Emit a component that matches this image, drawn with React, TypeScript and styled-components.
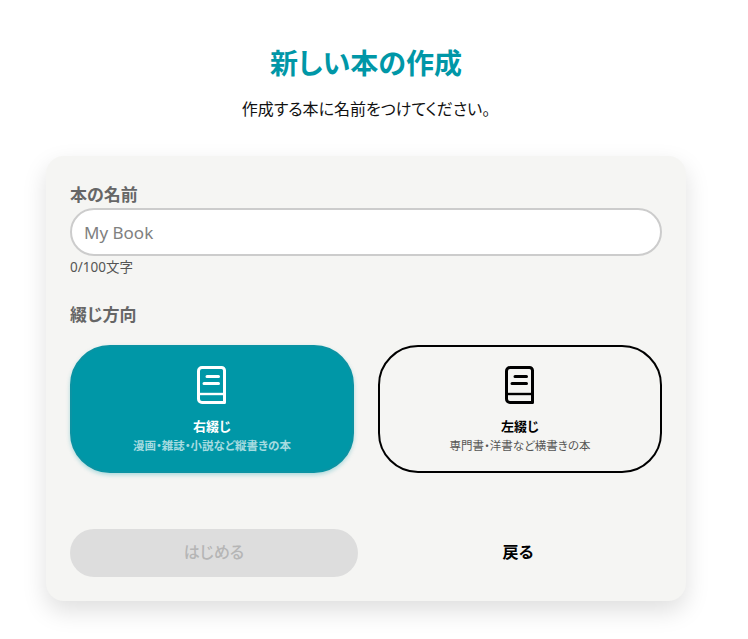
// App.tsx
import * as React from "react";
import styled, { createGlobalStyle } from "styled-components";

const FONT = `"Noto Sans", "Noto Sans CJK JP", sans-serif`;
const TEAL = "#0097a7";

const GlobalStyle = createGlobalStyle`
  html, body {
    margin: 0;
    padding: 0;
    background: #fff;
    overflow: hidden;
  }
  * {
    box-sizing: border-box;
  }
`;

const BookIcon = ({ color }: { color: string }) => (
  <svg width="30" height="38" viewBox="0 0 30 38" fill="none" aria-hidden="true">
    <path
      d="M5 1.5H24.5C26.2 1.5 27.5 2.8 27.5 4.5V36.5H5C3 36.5 1.5 35 1.5 33V5C1.5 3 3 1.5 5 1.5Z"
      stroke={color}
      strokeWidth="3"
      strokeLinejoin="round"
    />
    <path d="M2 28H27" stroke={color} strokeWidth="2.4" />
    <path d="M10 10.5H21.5M7 17.5H21.5" stroke={color} strokeWidth="3" strokeLinecap="round" />
  </svg>
);

const App = () => {
  const [name, setName] = React.useState("");
  const [direction, setDirection] = React.useState("right");

  return (
    <Page>
      <GlobalStyle />
      <Title>新しい本の作成</Title>
      <Lead>作成する本に名前をつけてください。</Lead>
      <Card>
        <Label>本の名前</Label>
        <NameInput
          value={name}
          placeholder="My Book"
          onChange={(event) => setName(event.target.value)}
        />
        <Counter>{name.length}/100文字</Counter>
        <DirectionLabel>綴じ方向</DirectionLabel>
        <Choices>
          <Choice $active={direction === "right"} onClick={() => setDirection("right")}>
            <BookIcon color={direction === "right" ? "#fff" : "#000"} />
            <ChoiceName>右綴じ</ChoiceName>
            <ChoiceNote $active={direction === "right"}>漫画・雑誌・小説など縦書きの本</ChoiceNote>
          </Choice>
          <Choice $active={direction === "left"} onClick={() => setDirection("left")}>
            <BookIcon color={direction === "left" ? "#fff" : "#000"} />
            <ChoiceName>左綴じ</ChoiceName>
            <ChoiceNote $active={direction === "left"}>専門書・洋書など横書きの本</ChoiceNote>
          </Choice>
        </Choices>
        <Actions>
          <StartButton disabled>はじめる</StartButton>
          <BackButton>戻る</BackButton>
        </Actions>
      </Card>
    </Page>
  );
};

export default App;

const Page = styled.div`
  width: 732px;
  height: 639px;
  padding-top: 44px;
  display: flex;
  flex-direction: column;
  align-items: center;
  font-family: ${FONT};
  font-feature-settings: "palt";
  color: #000;
`;

const Title = styled.h1`
  margin: 0;
  height: 38px;
  font-size: 28px;
  line-height: 38px;
  font-weight: 600;
  color: ${TEAL};
`;

const Lead = styled.p`
  margin: 15px 0 0;
  height: 24px;
  font-size: 16px;
  line-height: 24px;
  color: #111;
`;

const Card = styled.div`
  width: 640px;
  height: 445px;
  margin-top: 35px;
  padding: 28px 24px 24px;
  background: #f5f5f3;
  border-radius: 18px;
  box-shadow: 0 10px 24px rgba(0, 0, 0, 0.13);
  display: flex;
  flex-direction: column;
`;

const Label = styled.div`
  height: 22px;
  font-size: 17px;
  line-height: 22px;
  font-weight: 600;
  color: #666;
`;

const NameInput = styled.input`
  width: 100%;
  height: 48px;
  margin-top: 2px;
  padding: 0 12px;
  border: 2px solid #ccc;
  border-radius: 24px;
  background: #fff;
  font-family: ${FONT};
  font-size: 17px;
  color: #000;
  outline: 0;
  &::placeholder {
    color: #808080;
    opacity: 1;
  }
`;

const Counter = styled.div`
  height: 20px;
  margin-top: 1px;
  font-size: 13.5px;
  line-height: 20px;
  color: #555;
`;

const DirectionLabel = styled(Label)`
  margin-top: 27px;
`;

const Choices = styled.div`
  display: grid;
  grid-template-columns: 284px 284px;
  gap: 24px;
  margin-top: 19px;
`;

const Choice = styled.button<{ $active: boolean }>`
  height: 128px;
  padding: 19px 0 0;
  border-radius: 40px;
  border: 2px solid ${(p) => (p.$active ? "#0b93a3" : "#000")};
  background: ${(p) => (p.$active ? TEAL : "transparent")};
  color: ${(p) => (p.$active ? "#fff" : "#000")};
  box-shadow: ${(p) => (p.$active ? "0 2px 4px rgba(0, 151, 167, 0.3)" : "none")};
  font-family: ${FONT};
  font-feature-settings: "palt";
  display: flex;
  flex-direction: column;
  align-items: center;
  cursor: pointer;
`;

const ChoiceName = styled.span`
  height: 18px;
  margin-top: 13px;
  font-size: 13px;
  line-height: 18px;
  font-weight: 700;
`;

const ChoiceNote = styled.span<{ $active: boolean }>`
  height: 16px;
  margin-top: 3px;
  font-size: 11.5px;
  line-height: 16px;
  font-weight: ${(p) => (p.$active ? 700 : 400)};
  color: ${(p) => (p.$active ? "#a6dbe0" : "#555")};
`;

const Actions = styled.div`
  display: grid;
  grid-template-columns: 288px 288px;
  gap: 16px;
  margin-top: auto;
`;

const StartButton = styled.button`
  height: 48px;
  padding: 0 0 4px;
  border: 0;
  border-radius: 24px;
  background: #dddddd;
  color: #b5b5b5;
  font-family: ${FONT};
  font-feature-settings: "palt";
  font-size: 16px;
  font-weight: 500;
`;

const BackButton = styled.button`
  height: 48px;
  padding: 0 0 4px;
  border: 0;
  background: transparent;
  color: #000;
  font-family: ${FONT};
  font-feature-settings: "palt";
  font-size: 16px;
  font-weight: 700;
  cursor: pointer;
`;
